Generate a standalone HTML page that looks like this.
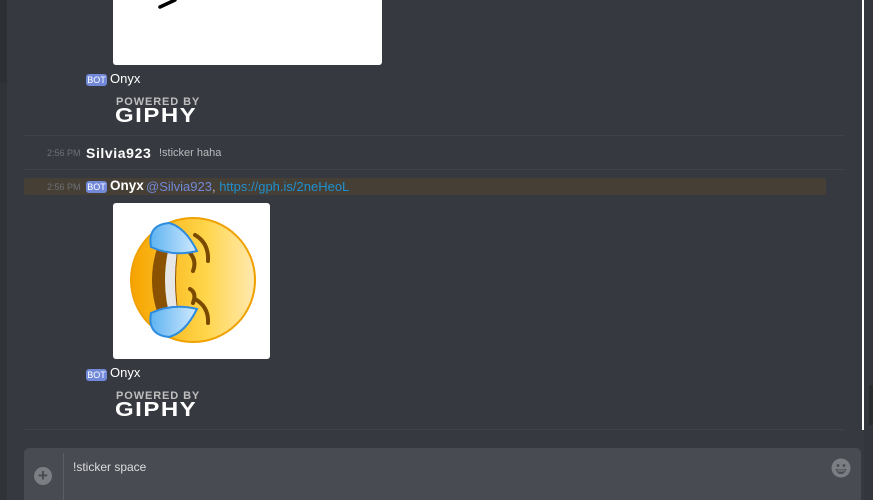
<!DOCTYPE html>
<html><head><meta charset="utf-8"><style>
*{margin:0;padding:0;box-sizing:border-box}
html,body{width:873px;height:500px;overflow:hidden}
body{background:#36393f;position:relative;font-family:"Liberation Sans",sans-serif;}
.a{position:absolute}
.bot{position:absolute;background:#7289da;color:#fff;font-size:9px;border-radius:3px;width:21px;height:12px;line-height:12px;text-align:center}
.name{position:absolute;color:#fff;font-size:13px;font-weight:bold}
.ts{position:absolute;color:#6e7177;font-size:9px}
.giphy{position:absolute;color:#fff;font-weight:bold;line-height:1}
.sep{position:absolute;left:24px;width:820px;height:1px;background:#3f4248}
</style></head><body>
<div class="a" style="left:0;top:0;width:7px;height:83px;background:#2c2f33"></div>
<div class="a" style="left:0;top:83px;width:7px;height:417px;background:#303338"></div>
<div class="a" style="left:862px;top:0;width:2px;height:430px;background:#fff"></div>
<div class="a" style="left:864px;top:0;width:9px;height:500px;background:#33363c"></div>
<div class="a" style="left:869px;top:385px;width:4px;height:40px;background:#2a2c30;border-radius:2px"></div>

<div class="a" style="left:113px;top:0;width:269px;height:65px;background:#fff;border-radius:0 0 3px 3px"></div>
<svg class="a" style="left:155px;top:0" width="22" height="10"><path d="M20 0 L5 7" stroke="#000" stroke-width="3.5" stroke-linecap="round"/></svg>

<div class="bot" style="left:86px;top:74px">BOT</div>
<div class="name" style="left:110px;top:71px;font-weight:normal">Onyx</div>
<div class="giphy" style="left:116px;top:97px;font-size:11px;color:#bfbfbf;letter-spacing:0.9px">POWERED BY</div>
<div class="giphy" style="left:115px;top:106px;font-size:24px;letter-spacing:1.5px;transform:scaleY(0.85);transform-origin:top left">GIPHY</div>
<div class="sep" style="top:135px"></div>

<div class="ts" style="left:47px;top:148px">2:56 PM</div>
<div class="name" style="left:86px;top:145px;font-size:14px;letter-spacing:0.6px">Silvia923</div>
<div class="a" style="left:159px;top:147px;font-size:11px;color:#b9bbbe">!sticker haha</div>
<div class="sep" style="top:169px"></div>

<div class="a" style="left:24px;top:178px;width:802px;height:17px;background:#453f35;border-radius:2px"></div>
<div class="ts" style="left:47px;top:182px">2:56 PM</div>
<div class="bot" style="left:86px;top:181px">BOT</div>
<div class="name" style="left:110px;top:178px;font-size:13.5px">Onyx</div>
<div class="a" style="left:146px;top:179px;font-size:13px;color:#7289da">@Silvia923<span style="color:#b9bbbe">,</span> <span style="color:#1e90d0">https://gph.is/2neHeoL</span></div>

<div class="a" style="left:113px;top:203px;width:157px;height:156px;background:#fff;border-radius:3px"></div>
<svg class="a" style="left:113px;top:203px" width="157" height="156" viewBox="0 0 157 156">
<defs><linearGradient id="g" x1="0" x2="1"><stop offset="0" stop-color="#f6a400"/><stop offset="0.6" stop-color="#ffd54a"/><stop offset="1" stop-color="#ffe9b0"/></linearGradient>
<linearGradient id="t" x1="0" x2="1"><stop offset="0" stop-color="#5fb3f0"/><stop offset="1" stop-color="#cfe9ff"/></linearGradient></defs>
<circle cx="80" cy="77" r="62" fill="url(#g)" stroke="#f0a000" stroke-width="2"/>
<path d="M50 30 Q28 77 50 124 L68 124 Q58 77 68 30 Z" fill="#8a5200"/>
<path d="M58 36 Q46 77 58 118 L66 118 Q58 77 66 36 Z" fill="#e6e6e6"/>
<path d="M82 32 Q96 40 95 58 M82 96 Q96 104 95 120 M77 50 Q84 58 80 68 M77 86 Q84 90 80 100" stroke="#7a4a00" stroke-width="4" fill="none" stroke-linecap="round"/>
<path d="M38 44 Q34 22 56 20 Q72 24 84 48 Q60 54 38 44Z" fill="url(#t)" stroke="#2d8be0" stroke-width="2"/>
<path d="M38 110 Q34 132 56 134 Q72 130 84 106 Q60 100 38 110Z" fill="url(#t)" stroke="#2d8be0" stroke-width="2"/>
</svg>

<div class="bot" style="left:86px;top:369px">BOT</div>
<div class="name" style="left:110px;top:365px;font-weight:normal">Onyx</div>
<div class="giphy" style="left:116px;top:391px;font-size:11px;color:#bfbfbf;letter-spacing:0.9px">POWERED BY</div>
<div class="giphy" style="left:115px;top:400px;font-size:24px;letter-spacing:1.5px;transform:scaleY(0.85);transform-origin:top left">GIPHY</div>
<div class="sep" style="top:429px"></div>

<div class="a" style="left:24px;top:448px;width:837px;height:52px;background:#484b51;border-radius:5px 5px 0 0"></div>
<div class="a" style="left:63px;top:453px;width:1px;height:47px;background:#5a5d63"></div>
<div class="a" style="left:34px;top:467px;width:18px;height:18px;border-radius:50%;background:#7b7e83;color:#484b51;font-size:17px;font-weight:bold;line-height:18px;text-align:center">+</div>
<div class="a" style="left:73px;top:460px;font-size:12px;color:#dcddde">!sticker space</div>
<svg class="a" style="left:831px;top:458px" width="20" height="20" viewBox="0 0 20 20">
<circle cx="10" cy="10" r="9.5" fill="#7b7e83"/>
<circle cx="7" cy="7.5" r="1.4" fill="#484b51"/><circle cx="13" cy="7.5" r="1.4" fill="#484b51"/>
<path d="M4.5 11 Q10 12 15.5 11 Q14 16 10 16 Q6 16 4.5 11Z" fill="#484b51"/>
<path d="M6 12 Q10 12.8 14 12 L13.5 13.2 Q10 14 6.5 13.2Z" fill="#7b7e83"/>
</svg>
</body></html>
